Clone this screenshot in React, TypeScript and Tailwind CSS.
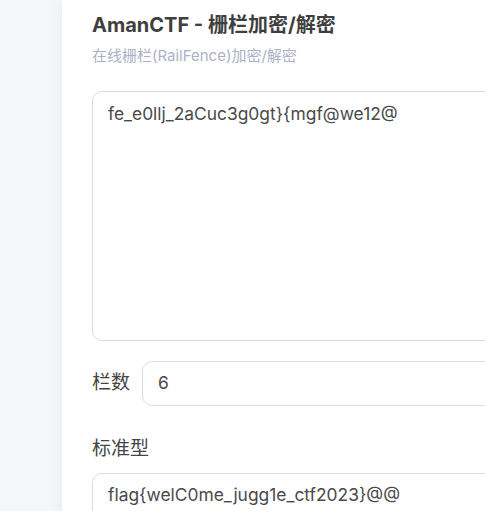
import React from "react";

export default function App() {
  const font = { fontFamily: 'Inter, "Noto Sans CJK SC", sans-serif' };
  const t1 = "fe_e0llj_2aCuc3g0gt}{mgf@we12@";
  const t2 = "flag{welC0me_jugg1e_ctf2023}@@";
  return (
    <div className="w-[485px] h-[511px] overflow-hidden bg-[#f5f6f8] relative" style={font}>
      <div className="ml-[62px] w-[600px] h-[600px] bg-white shadow-[0_0_14px_rgba(0,0,0,0.06)] pl-[30px] pt-[11px]">
        <h1 className="text-[20px] leading-[28px] font-bold text-[#3f3f3f]">AmanCTF - 栅栏加密/解密</h1>
        <p className="mt-[7px] text-[15px] leading-[20px] text-[#adb0c6]">在线栅栏(RailFence)加密/解密</p>
        <div className="mt-[25px] h-[250px] w-[520px] border border-[#dcdcdc] rounded-[10px] px-[15px] pt-[10px] text-[17.4px] leading-[24px] text-[#4a4a4a]">
          {t1}
        </div>
        <div className="mt-[20px] flex items-center gap-[12px]">
          <span className="text-[19px] text-[#444]">栏数</span>
          <div className="h-[45px] flex-1 border border-[#dcdcdc] rounded-[10px] px-[15px] flex items-center text-[17.4px] text-[#4a4a4a]">6</div>
        </div>
        <div className="mt-[29px] text-[19px] leading-[28px] text-[#444]">标准型</div>
        <div className="mt-[10px] h-[100px] w-[520px] border border-[#dcdcdc] rounded-[10px] px-[15px] pt-[9px] text-[17.4px] leading-[24px] text-[#4a4a4a]">
          {t2}
        </div>
      </div>
    </div>
  );
}
